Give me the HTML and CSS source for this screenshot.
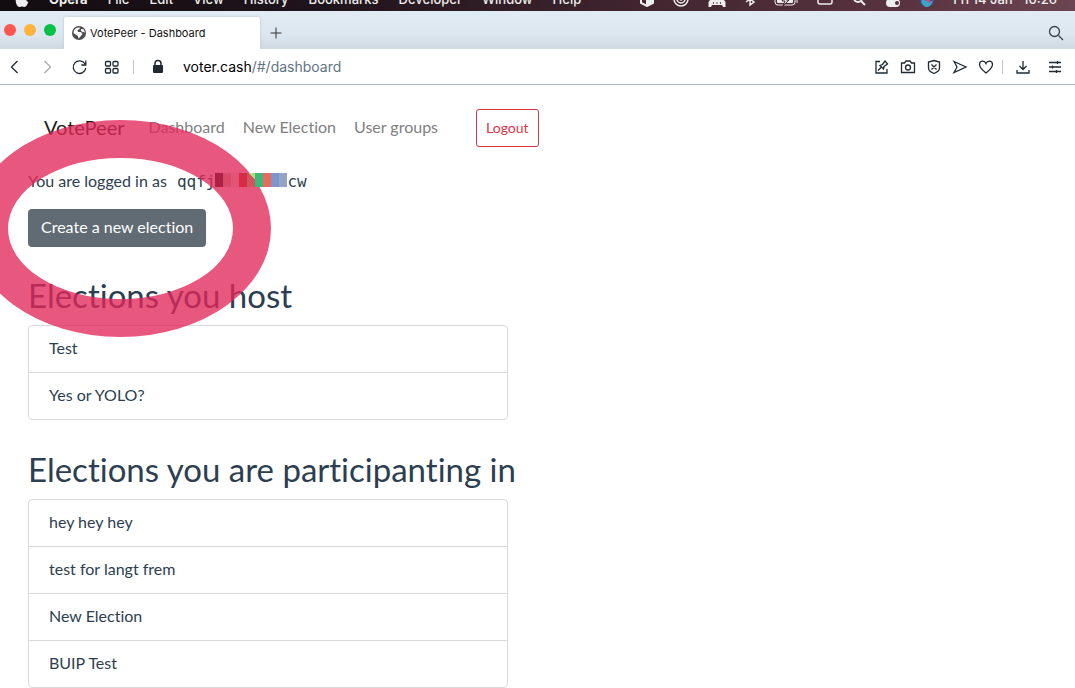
FILE: index.html
```
<!DOCTYPE html>
<html lang="en">

<head>
  <meta charset="UTF-8">
  <meta name="viewport" content="width=device-width, initial-scale=1.0">
  <title>VotePeer - Dashboard</title>
  <link rel="stylesheet" href="styles.css">
</head>

<body>

  <div class="menubar">
    <div class="menus">
      <svg class="apple" width="14" height="16" viewBox="0 0 14 16"><path d="M7 4c2-1.500 4.500-1 5.500.7-2.500 1.600-2 5.200.8 6.300C12.500 13.500 11 16 9.500 16c-1 0-1.500-.6-2.500-.6s-1.500.6-2.500.6C2.500 16 .7 12.500.7 9.500.7 5 4 2.800 7 4z" fill="#eee"/></svg>
      <b>Opera</b>
      <span>File</span>
      <span>Edit</span>
      <span>View</span>
      <span>History</span>
      <span>Bookmarks</span>
      <span>Developer</span>
      <span>Window</span>
      <span>Help</span>
    </div>
    <div class="status">
      <svg width="14" height="16" viewBox="0 0 14 16" fill="none" stroke="#eee" stroke-width="2"><path d="M1 4.500 7 1.500l6 3v7.500l-6 3-6-3zM1 5l6 3 6-3M7 8v7"/><path d="M7 9l6-3v6l-6 3z" fill="#eee" stroke="none"/></svg>
      <svg width="16" height="16" viewBox="0 0 16 16" fill="none" stroke="#eee" stroke-width="1.500"><circle cx="8" cy="8" r="7"/><circle cx="8" cy="8" r="4"/><circle cx="8" cy="8" r="1"/></svg>
      <svg width="18" height="16" viewBox="0 0 18 16"><path d="M3 3h12l1 6 1.500 2v5H15l-1-2H4l-1 2H.5v-5L2 9z" fill="#eee"/><path d="M5 12h1M8.500 12h1M12 12h1" stroke="#40252f" stroke-width="1.500"/></svg>
      <svg width="10" height="16" viewBox="0 0 10 16" fill="none" stroke="#eee" stroke-width="1.500"><path d="M1 5l8 6-4 3V2l4 3-8 6"/></svg>
      <svg width="24" height="16" viewBox="0 0 24 16"><rect x="1" y="5" width="20" height="9" rx="3" fill="none" stroke="#eee"/><rect x="3" y="7" width="16" height="5" rx="1" fill="#eee"/><path d="M23 8v4" stroke="#eee"/><path d="M13 3 8 10h3l-2 5 6-6h-3z" fill="#eee" stroke="#40252f"/></svg>
      <svg width="16" height="16" viewBox="0 0 16 16" fill="none" stroke="#eee" stroke-width="1.500"><rect x="1" y="4" width="14" height="9" rx="2"/></svg>
      <svg width="14" height="16" viewBox="0 0 14 16" fill="none" stroke="#eee" stroke-width="2"><circle cx="6" cy="7" r="4"/><path d="M9 10l4 4"/></svg>
      <svg width="16" height="16" viewBox="0 0 16 16"><rect x="1" y="1" width="14" height="6" rx="3" fill="#eee"/><rect x="1" y="8" width="14" height="8" rx="4" fill="#eee"/><circle cx="12" cy="12" r="2" fill="#54323f"/></svg>
      <svg width="14" height="16" viewBox="0 0 14 16"><circle cx="7" cy="9" r="7" fill="#3b4f8c"/><path d="M1 10c4-4 8 4 12-1-1 5-4 7-6 7s-5-2-6-6z" fill="#3aa5c4"/><path d="M3 7c4 0 5 4 8 4" stroke="#d34a8c" stroke-width="2" fill="none"/></svg>
      <span>Fri 14 Jan&nbsp;&nbsp; 10:26</span>
    </div>
  </div>

  <div class="tabstrip">
    <div class="lights">
      <i class="light red"></i>
      <i class="light amber"></i>
      <i class="light green"></i>
    </div>
    <div class="tab">
      <svg width="14" height="14" viewBox="0 0 14 14"><circle cx="7" cy="7" r="7" fill="#4d4d4d"/><path d="M2 4.500C3 2 5.500 1.200 8 1.500L7.500 3 5.500 4l.5 2h3l1.500 2L8 11l-1.500 1.800L6 10 3.500 8.500 1.500 7z" fill="#fff"/><path d="M9 3l2.500.2L13 6.500l-2-.5-2-1z" fill="#fff"/></svg>
      <span>VotePeer - Dashboard</span>
    </div>
    <button class="new-tab" aria-label="New tab">
      <svg width="12" height="12" viewBox="0 0 12 12" stroke="#333" stroke-width="1"><path d="M6 .5v11M.5 6h11"/></svg>
    </button>
    <button class="find" aria-label="Search tabs">
      <svg width="16" height="16" viewBox="0 0 16 16" fill="none" stroke="#3a4148" stroke-width="1.300"><circle cx="6.500" cy="6.500" r="5"/><path d="M10.500 10.500l4.500 4.500"/></svg>
    </button>
  </div>

  <div class="toolbar">
    <button aria-label="Back"><svg width="16" height="16" viewBox="0 0 16 16"><path d="M10.500 2l-6 6 6 6"/></svg></button>
    <button aria-label="Forward" class="off"><svg width="16" height="16" viewBox="0 0 16 16"><path d="M5.500 2l6 6-6 6"/></svg></button>
    <button aria-label="Reload"><svg width="16" height="16" viewBox="0 0 16 16"><path d="M14 5A6.300 6.300 0 1 0 14.800 9M14.800 1.500V6H10.300"/></svg></button>
    <button aria-label="Speed dial"><svg width="16" height="16" viewBox="0 0 16 16"><rect x="2.500" y="2.500" width="5" height="4.500" rx="1"/><rect x="10" y="2.500" width="5" height="4.500" rx="1"/><rect x="2.500" y="9.500" width="5" height="4.500" rx="1"/><rect x="10" y="9.500" width="5" height="4.500" rx="1"/></svg></button>
    <i class="divider"></i>
    <svg class="lock" width="12" height="16" viewBox="0 0 12 16"><rect x="1" y="6" width="10" height="8" rx="1" fill="#1f2a33"/><path d="M3 7V4.500a3 3 0 0 1 6 0V7" fill="none" stroke="#1f2a33" stroke-width="1.500"/></svg>
    <span class="address">voter.cash<span class="path">/#/dashboard</span></span>
    <div class="tools">
      <button aria-label="Pin"><svg width="16" height="16" viewBox="0 0 16 16"><path d="M6 2.500H2v11.500h11v-4M4 11.500l3-3M6 6.500l3.500 3.500.5-2.500L13.500 5 11 2 8.500 5.500z"/></svg></button>
      <button aria-label="Snapshot"><svg width="16" height="16" viewBox="0 0 16 16"><path d="M1.500 4h3l1.500-2h4l1.500 2h3v9.500h-13z"/><circle cx="8" cy="8.500" r="2.500"/></svg></button>
      <button aria-label="Ad blocker"><svg width="16" height="16" viewBox="0 0 16 16"><path d="M8 1.500 13.500 3v6c0 3-3 4.500-5.500 5.500C5.500 13.500 2.500 12 2.500 9V3zM5.500 5.500l5 5M10.500 5.500l-5 5"/></svg></button>
      <button aria-label="My flow"><svg width="16" height="16" viewBox="0 0 16 16"><path d="M2 2.500 14 8 2 13.500 5 8z"/></svg></button>
      <button aria-label="Bookmark"><svg width="16" height="16" viewBox="0 0 16 16"><path d="M8 14C5 11.500 1.500 9 1.500 5.500 1.500 1.500 6.500 1 8 4.500 9.500 1 14.500 1.500 14.500 5.500 14.500 9 11 11.500 8 14z"/></svg></button>
      <i class="divider"></i>
      <button class="download" aria-label="Downloads"><svg width="16" height="16" viewBox="0 0 16 16"><path d="M8 2v8.500M4.500 7 8 10.500 11.500 7M2 11v3h12v-3"/></svg></button>
      <button class="setup" aria-label="Easy setup"><svg width="16" height="16" viewBox="0 0 16 16"><path d="M2 3.500h12M2 8h12M2 12.500h12M10.500 2v3M5.500 6.500v3M9.500 11v3"/></svg></button>
    </div>
  </div>

  <main>
    <nav>
      <a class="brand" href="#/">VotePeer</a>
      <a href="#/dashboard">Dashboard</a>
      <a href="#/new">New Election</a>
      <a href="#/groups">User groups</a>
      <button class="logout">Logout</button>
    </nav>

    <p class="account">You are logged in as <code>qqfj<span class="hidden-part"><i></i><i></i><i></i><i></i><i></i><i></i><i></i><i></i><i></i></span>cw</code></p>
    <button class="create">Create a new election</button>

    <h2>Elections you host</h2>
    <ul>
      <li>Test</li>
      <li>Yes or YOLO?</li>
    </ul>

    <h2>Elections you are participanting in</h2>
    <ul>
      <li>hey hey hey</li>
      <li>test for langt frem</li>
      <li>New Election</li>
      <li>BUIP Test</li>
    </ul>

    <div class="ring"></div>
  </main>

</body>

</html>
```
FILE: styles.css
```
* {
  box-sizing: border-box;
}

body {
  margin: 0;
  font-family: Lato, 'Liberation Sans', sans-serif;
  font-size: 16px;
  font-variant-ligatures: none;
  line-height: 24px;
  color: #2c3e50;
  background: #fff;
  overflow: hidden;
}

button {
  font-family: inherit;
  font-variant-ligatures: none;
  border: 0;
  padding: 0;
  background: none;
  cursor: pointer;
}

svg {
  display: block;
  flex: none;
}

/* system menu bar, cut off by the top of the screen */
.menubar {
  height: 11px;
  padding: 0 18px 2px 15px;
  display: flex;
  justify-content: space-between;
  align-items: flex-end;
  overflow: hidden;
  font: 500 13px/20px Inter, sans-serif;
  color: #eee;
  background: linear-gradient(90deg, #120c10, #1f141b 30%, #40252f 60%, #5a3441 85%, #6b4652);
}

.menus,
.status {
  display: flex;
  align-items: center;
  gap: 20px;
  white-space: nowrap;
}

.status {
  gap: 19px;
}

.tabstrip {
  height: 38px;
  display: flex;
  align-items: center;
  background: linear-gradient(#e1ebf4, #dde7ef 60%, #cfd9e2);
}

.lights {
  width: 64px;
  padding-left: 4px;
  display: flex;
  gap: 8px;
}

.light {
  width: 12px;
  height: 12px;
  border-radius: 50%;
}

.red {
  background: #ff5650;
}

.amber {
  background: #ffb23e;
}

.green {
  background: #06c047;
}

.tab {
  width: 196px;
  height: 32px;
  margin-top: 6px;
  padding: 0 8px;
  display: flex;
  align-items: center;
  gap: 4px;
  font: 11px Inter, sans-serif;
  color: #111;
  background: #fff;
  border-radius: 2px 2px 0 0;
  box-shadow: 0 0 3px #b6c6d2;
  clip-path: inset(-3px -3px 0);
}

.new-tab {
  margin: 5px 0 0 10px;
}

.find {
  margin: 5px 11px 0 auto;
}

.toolbar {
  height: 36px;
  padding: 0 12px 0 7px;
  display: flex;
  align-items: center;
  border-bottom: 1px solid #a3b4c0;
}

.toolbar button {
  margin-right: 16px;
}

.toolbar button svg {
  fill: none;
  stroke: #1f2a33;
  stroke-width: 1.3;
}

.toolbar .off svg {
  stroke: #aaa;
}

.divider {
  width: 1px;
  height: 14px;
  margin-left: -2px;
  background: #c4c4c4;
}

.lock {
  margin: 0 19px 0 18px;
}

.address {
  font: 14px Inter, sans-serif;
  color: #000;
}

.path {
  color: #5f7482;
}

.tools {
  margin-left: auto;
  display: flex;
  align-items: center;
}

.tools button {
  margin-right: 10px;
}

.tools .download {
  margin: 0 16px 0 12px;
}

.tools .setup {
  margin-right: 0;
}

main {
  position: relative;
  padding: 24px 28px 0;
}

nav {
  padding-left: 16px;
  display: flex;
  align-items: center;
  gap: 18px;
}

nav a {
  padding-bottom: 2px;
  color: #808080;
  text-decoration: none;
}

nav .brand {
  margin-right: 6px;
  font-size: 20px;
  color: #1a1a1a;
}

.logout {
  height: 38px;
  margin-left: 20px;
  padding: 0 9px 2px;
  border: 1px solid #dc3545;
  border-radius: 3px;
  font-size: 14px;
  color: #dc3545;
}

.account {
  margin: 22px 0 15px;
}

code {
  margin-left: 6px;
  font: 16px/24px 'DejaVu Sans Mono', monospace;
}

/* part of the address is blanked out with coloured blocks */
.hidden-part {
  display: inline-flex;
  position: relative;
  z-index: 2;
}

.hidden-part i {
  width: 8px;
  height: 14px;
  background: #ae2147;
}

.hidden-part i:nth-child(2) {
  background: #d9496a;
}

.hidden-part i:nth-child(3) {
  background: #e35577;
}

.hidden-part i:nth-child(4) {
  background: #d92b45;
}

.hidden-part i:nth-child(5) {
  background: linear-gradient(50deg, #d05560 70%, #b7dc80 70%);
}

.hidden-part i:nth-child(6) {
  background: #3db87b;
}

.hidden-part i:nth-child(7) {
  background: #ea6a5b;
}

.hidden-part i:nth-child(8) {
  background: #7c98cb;
}

.hidden-part i:nth-child(9) {
  background: #94a4c6;
}

.create {
  display: block;
  height: 38px;
  padding: 0 13px 3px;
  border-radius: 4px;
  font-size: 16px;
  color: #fff;
  background: #606b73;
}

h2 {
  margin: 32px 0 0;
  padding-bottom: 14px;
  font-size: 33px;
  font-weight: 400;
  line-height: 32px;
}

ul {
  width: 480px;
  max-width: 100%;
  margin: 0 0 33px;
  padding: 0;
  list-style: none;
  border: 1px solid #d9d9d9;
  border-radius: 4px;
}

li {
  padding: 10px 20px 12px;
}

li + li {
  border-top: 1px solid #d9d9d9;
}

/* highlight around the create button */
.ring {
  position: absolute;
  left: -30px;
  top: 35px;
  width: 301px;
  height: 217px;
  border: 38px solid rgba(226, 40, 90, 0.78);
  border-radius: 50%;
  pointer-events: none;
}
```
